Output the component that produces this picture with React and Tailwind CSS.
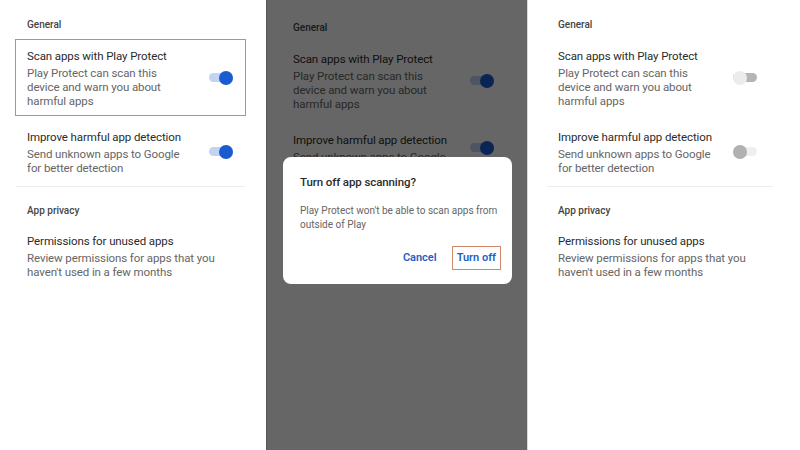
import React from 'react';

const Toggle = ({ on, trackClass, thumbClass }) => (
  <div className="relative w-[24px] h-[14px] flex items-center shrink-0">
    <div className={`h-[9px] w-full rounded-full ${trackClass}`}></div>
    <div
      className={`absolute top-0 w-[14px] h-[14px] rounded-full ${on ? 'right-0' : 'left-0'} ${thumbClass}`}
    ></div>
  </div>
);

const Row = ({ title, lines, toggle }) => (
  <div className="flex items-center justify-between pl-[11px] pr-[12px]">
    <div className="pt-[8px] pb-[7px] tracking-[-0.1px]">
      <p className="mb-[1px] text-[11.5px] leading-[17px] text-[#2b2b2b]">{title}</p>
      {lines.map((l, i) => (
        <p key={i} className="text-[11.5px] leading-[14px] text-[#666]">
          {l}
        </p>
      ))}
    </div>
    {toggle}
  </div>
);

const Settings = ({ toggles, highlight, pad, short }) => {
  const first = (
    <Row
      title="Scan apps with Play Protect"
      lines={['Play Protect can scan this', 'device and warn you about', 'harmful apps']}
      toggle={toggles[0]}
    />
  );
  return (
    <div className={`pt-[18px] ${pad}`}>
      <p className="pl-[12px] text-[10px] font-medium text-[#444] leading-[14px]">General</p>
      {highlight ? (
        <div className="mt-[7px] border border-[#d4866a]">{first}</div>
      ) : (
        <div className="mt-[7px] border border-transparent">{first}</div>
      )}
      <div className="mt-[4px] border border-transparent">
        <Row
          title="Improve harmful app detection"
          lines={short ? ['Send unknown apps to Google'] : ['Send unknown apps to Google', 'for better detection']}
          toggle={toggles[1]}
        />
      </div>
      {!short && (
        <>
          <div className="mt-[3px] h-px bg-[#ececec] mx-px"></div>
          <p className="pl-[12px] mt-[17px] text-[10px] font-medium text-[#444] leading-[14px]">App privacy</p>
          <div className="mt-[6px] border border-transparent">
            <Row
              title="Permissions for unused apps"
              lines={['Review permissions for apps that you', "haven't used in a few months"]}
              toggle={null}
            />
          </div>
        </>
      )}
    </div>
  );
};

const onToggle = <Toggle on trackClass="bg-[#c3d3f3]" thumbClass="bg-[#1a5cd0]" />;

export default function App() {
  return (
    <div
      className="flex w-[800px] h-[450px] bg-white overflow-hidden"
      style={{ fontFamily: 'Roboto, "Noto Sans", sans-serif' }}
    >
      <div className="w-[266px] shrink-0 bg-white">
        <Settings toggles={[onToggle, onToggle]} highlight pad="pl-[15px] pr-[20px]" />
      </div>

      <div className="relative w-[262px] shrink-0 bg-[#666] border-l border-l-[#555] border-r border-r-[#d8d8d8] overflow-hidden">
        <div className="relative h-[157px] overflow-hidden bg-white">
          <div className="-ml-px pt-[3px]">
            <Settings toggles={[onToggle, onToggle]} pad="pl-[15px] pr-[20px]" short />
          </div>
          <div className="absolute inset-0 bg-black/60"></div>
        </div>
        <div className="ml-[16px] w-[229px] rounded-[8px] bg-white px-[17px] pt-[17px] pb-[14px]">
          <p className="text-[11.5px] tracking-[-0.1px] font-medium text-[#2b2b2b] leading-[16px]">
            Turn off app scanning?
          </p>
          <p className="mt-[14px] text-[10px] whitespace-nowrap leading-[14px] text-[#666]">
            Play Protect won't be able to scan apps from
            <br />
            outside of Play
          </p>
          <div className="mt-[14px] flex justify-end items-center gap-[15px] -mr-[6px]">
            <span className="text-[11px] font-semibold text-[#1f5fc4]">Cancel</span>
            <span className="border border-[#d4866a] px-[4px] py-[4px] text-[11px] font-semibold text-[#1f5fc4] leading-[14px]">
              Turn off
            </span>
          </div>
        </div>
      </div>

      <div className="w-[272px] shrink-0 bg-white">
        <Settings
          pad="pl-[18px] pr-[26px]"
          toggles={[
            <div key="a" className="mr-[4px]">
              <Toggle trackClass="bg-[#b5b5b5]" thumbClass="bg-[#ececec]" />
            </div>,
            <div key="b" className="mr-[4px]">
              <Toggle trackClass="bg-[#efefef]" thumbClass="bg-[#b0b0b0]" />
            </div>,
          ]}
        />
      </div>
    </div>
  );
}
